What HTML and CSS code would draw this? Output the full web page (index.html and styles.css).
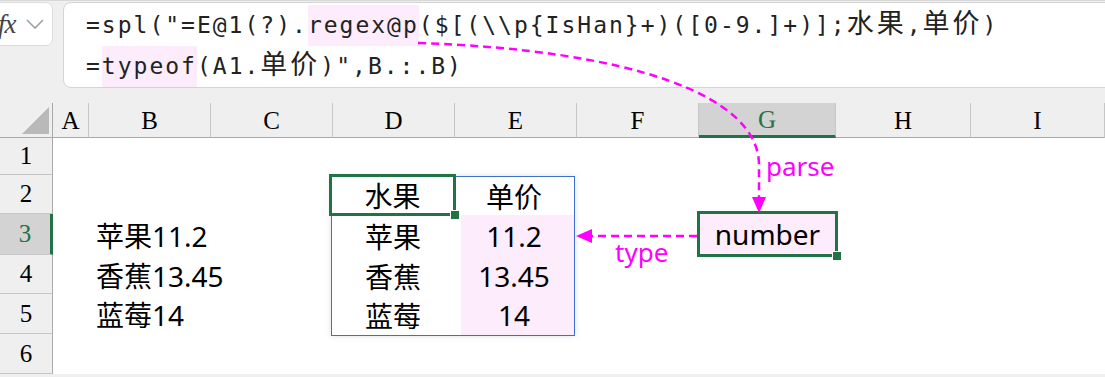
FILE: index.html
```html
<!DOCTYPE html>
<html lang="zh-CN">
<head>
    <meta charset="UTF-8">
    <title>spl regex typeof</title>
    <link rel="stylesheet" href="styles.css">
</head>
<body>

    <!-- Formula bar -->
    <div class="formula-bar">
        <div class="name-fx">
            <span class="fx">fx</span>
            <svg class="chev" width="20" height="12" viewBox="0 0 20 12"><path d="M2 2 L10 10 L18 2" fill="none" stroke="#a0a0a0" stroke-width="1.6"/></svg>
        </div>
        <div class="formula">
            <div class="line">=spl("=E@1(?).<span class="hl">regex@p</span>($[(\\p{IsHan}+)([0-9.]+)];<span class="cjk">水果</span>,<span class="cjk">单价</span>)</div>
            <div class="line">=<span class="hl">typeof</span>(A1.<span class="cjk">单价</span>)",B.:.B)</div>
        </div>
    </div>

    <!-- Sheet -->
    <div class="sheet">
        <div class="corner"><div class="tri"></div></div>
        <div class="colhead">A</div>
        <div class="colhead">B</div>
        <div class="colhead">C</div>
        <div class="colhead">D</div>
        <div class="colhead">E</div>
        <div class="colhead">F</div>
        <div class="colhead sel">G</div>
        <div class="colhead">H</div>
        <div class="colhead">I</div>

        <!-- the D2:E5 table, placed over its range -->
        <div class="fruit-table">
            <div class="tcell head active">水果</div>
            <div class="tcell head">单价</div>
            <div class="tcell">苹果</div>
            <div class="tcell price">11.2</div>
            <div class="tcell">香蕉</div>
            <div class="tcell price">13.45</div>
            <div class="tcell">蓝莓</div>
            <div class="tcell price">14</div>
        </div>

        <!-- row 1 -->
        <div class="rowhead">1</div>
        <div></div><div></div><div></div><div></div><div></div><div></div><div></div><div></div><div></div>

        <!-- row 2 -->
        <div class="rowhead">2</div>
        <div></div><div></div><div></div><div></div><div></div><div></div><div></div>

        <!-- row 3 -->
        <div class="rowhead sel">3</div>
        <div></div>
        <div class="cell text">苹果11.2</div>
        <div></div><div></div>
        <div class="cell result">number</div>
        <div></div><div></div>

        <!-- row 4 -->
        <div class="rowhead">4</div>
        <div></div>
        <div class="cell text">香蕉13.45</div>
        <div></div><div></div><div></div><div></div><div></div>

        <!-- row 5 -->
        <div class="rowhead">5</div>
        <div></div>
        <div class="cell text">蓝莓14</div>
        <div></div><div></div><div></div><div></div><div></div>

        <!-- row 6 -->
        <div class="rowhead">6</div>
        <div></div><div></div><div></div><div></div><div></div><div></div><div></div><div></div><div></div>
    </div>

    <!-- annotation arrows drawn over the sheet -->
    <svg class="arrows" width="1105" height="377" viewBox="0 0 1105 377">
        <path d="M418 43 C630 50 759 95 759 165 L759 199" fill="none" stroke="#ff00ff" stroke-width="2.5" stroke-dasharray="8 5"/>
        <polygon points="752,197 766,197 759,213" fill="#ff00ff"/>
        <path d="M697 236 L592 236" fill="none" stroke="#ff00ff" stroke-width="2.5" stroke-dasharray="8 5"/>
        <polygon points="592,229 592,243 576,236" fill="#ff00ff"/>
        <text x="766" y="176" class="label">parse</text>
        <text x="615" y="262" class="label">type</text>
    </svg>

</body>
</html>
```

FILE: styles.css
```css
* { margin: 0; padding: 0; box-sizing: border-box; }

body {
    width: 1105px;
    height: 377px;
    background: #efefef;
    font-family: "Noto Sans", "Noto Sans CJK SC", sans-serif;
    color: #000;
    overflow: hidden;
    position: relative;
}

/* ---------- formula bar ---------- */
.formula-bar {
    display: flex;
    align-items: flex-start;
    height: 103px;
    padding-top: 1px;
    border-top: 1px solid #d8d8d8;
}

.name-fx {
    width: 61px;
    height: 44px;
    margin-left: -8px;
    background: #fff;
    border: 1px solid #dcdcdc;
    border-radius: 7px;
    display: flex;
    align-items: center;
    gap: 9px;
    padding-left: 5px;
}

.fx {
    font-family: "Liberation Serif", serif;
    font-style: italic;
    font-size: 27px;
    color: #444;
    letter-spacing: -1px;
}

.formula {
    flex: 1;
    margin-left: 10px;
    margin-right: -12px;
    height: 86px;
    background: #fff;
    border: 1px solid #d4d4d4;
    border-radius: 8px 0 0 8px;
    padding: 2px 0 0 22px;
    font-family: "DejaVu Sans Mono", "Noto Sans CJK SC", monospace;
    font-size: 23px;
    letter-spacing: 2px;
    color: #222;
}

.line {
    height: 41px;
    line-height: 41px;
    white-space: pre;
}

.hl {
    display: inline-block;
    background: #fcecfc;
    height: 41px;
}

.cjk {
    font-family: "Noto Sans CJK SC", sans-serif;
    font-size: 27px;
    letter-spacing: 3px;
    line-height: 1;
}

/* ---------- sheet grid ---------- */
.sheet {
    display: grid;
    grid-template-columns: 53px 36px 122px 122px 122px 122px 122px 137px 135px 1fr;
    grid-template-rows: 35px 37px 39px 41px 39px 40px 40px;
    background: #fff;
}

.corner {
    background: #efefef;
    border-right: 1px solid #a9a9a9;
    border-bottom: 1px solid #a9a9a9;
    position: relative;
}

.tri {
    position: absolute;
    right: 3px;
    bottom: 3px;
    width: 27px;
    height: 27px;
    background: #b9b9b9;
    clip-path: polygon(100% 0, 100% 100%, 0 100%);
}

.colhead {
    background: #efefef;
    border-right: 1px solid #c6c6c6;
    border-bottom: 1px solid #a9a9a9;
    font-family: "Liberation Serif", serif;
    font-size: 25px;
    display: flex;
    align-items: center;
    justify-content: center;
    padding-top: 2px;
}

.colhead.sel {
    background: #d3d3d3;
    color: #217346;
    border-bottom: 3px solid #217346;
}

.rowhead {
    background: #efefef;
    border-right: 1px solid #a9a9a9;
    border-bottom: 1px solid #c6c6c6;
    font-family: "Liberation Serif", serif;
    font-size: 25px;
    display: flex;
    align-items: center;
    justify-content: center;
}

.rowhead.sel {
    background: #d3d3d3;
    color: #217346;
    border-right: 3px solid #217346;
}

.cell {
    display: flex;
    align-items: center;
    font-size: 28px;
    white-space: nowrap;
}

.cell.text { padding-left: 7px; }

.cell.result {
    justify-content: center;
    background: #fcecfc;
    outline: 3px solid #217346;
    outline-offset: -1px;
    position: relative;
    margin: -1px 0 0 0;
}

.cell.result::after {
    content: "";
    position: absolute;
    right: -6px;
    bottom: -6px;
    width: 8px;
    height: 8px;
    background: #217346;
    border: 1px solid #fff;
}

/* D2:E5 table */
.fruit-table {
    grid-column: 5 / 7;
    grid-row: 3 / 7;
    margin: 1px 2px -2px -2px;
    display: grid;
    grid-template-columns: 122px 1fr;
    grid-template-rows: 38px 41px 39px 1fr;
    border: 1px solid #3f6fcc;
    box-shadow: 0 0 6px rgba(0, 0, 0, 0.12);
    background: #fff;
    z-index: 1;
}

.tcell {
    display: flex;
    align-items: center;
    justify-content: center;
    font-size: 28px;
}

.tcell.price {
    background: linear-gradient(90deg, transparent 7px, #fcecfc 7px);
}

.tcell.active {
    position: relative;
    outline: 3px solid #217346;
    outline-offset: -1px;
    margin: -1px 0 1px -1px;
}

.tcell.active::after {
    content: "";
    position: absolute;
    right: -6px;
    bottom: -6px;
    width: 8px;
    height: 8px;
    background: #217346;
    border: 1px solid #fff;
}

/* annotation overlay */
.arrows {
    position: absolute;
    left: 0;
    top: 0;
    pointer-events: none;
    z-index: 5;
}

.label {
    font-family: "Noto Sans", sans-serif;
    font-size: 26px;
    fill: #ff00ff;
}
```
